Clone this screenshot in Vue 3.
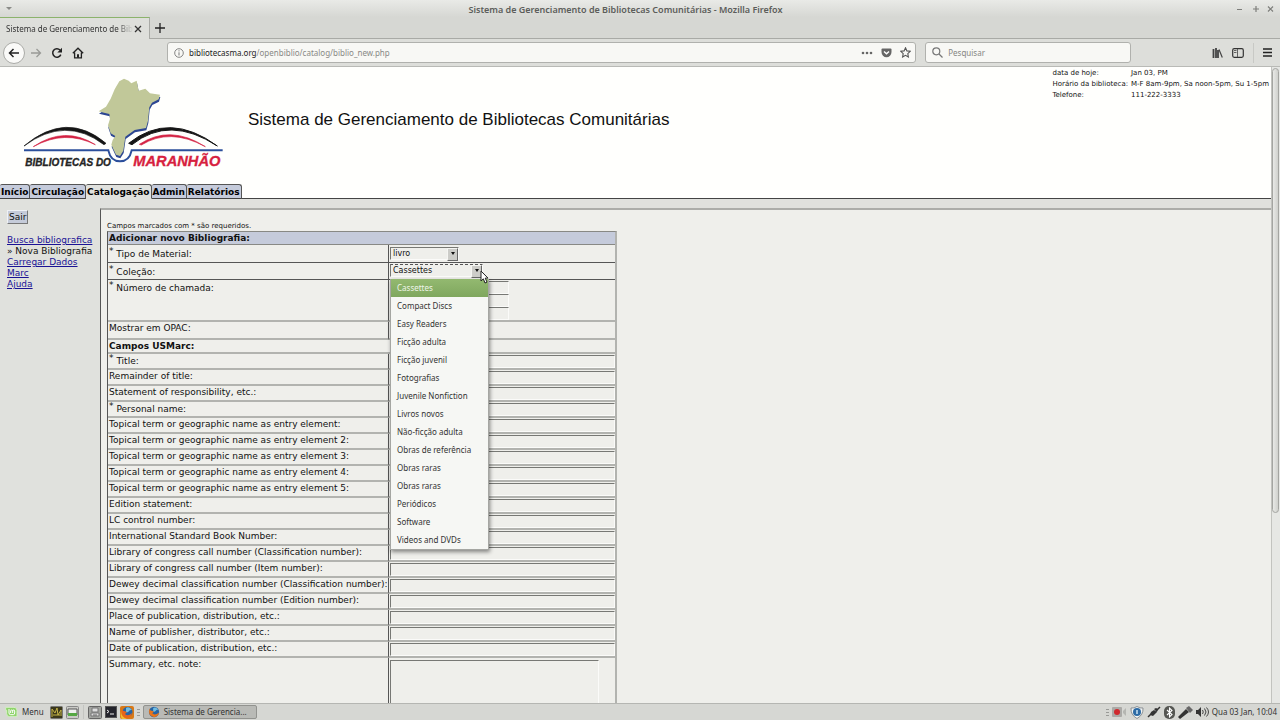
<script setup>
import { ref } from 'vue'

const tabs = ['Início', 'Circulação', 'Catalogação', 'Admin', 'Relatórios']
const activeTab = ref('Catalogação')

const material = ref('livro')
const collection = ref('Cassettes')
const menuOpen = ref(true)

const collections = [
  'Cassettes',
  'Compact Discs',
  'Easy Readers',
  'Ficção adulta',
  'Ficção juvenil',
  'Fotografias',
  'Juvenile Nonfiction',
  'Livros novos',
  'Não-ficção adulta',
  'Obras de referência',
  'Obras raras',
  'Obras raras',
  'Periódicos',
  'Software',
  'Videos and DVDs'
]

const selectedIndex = ref(0)

const choose = (index) => {
  selectedIndex.value = index
  collection.value = collections[index]
  menuOpen.value = false
}

const fields = [
  { label: 'Title:', required: true },
  { label: 'Remainder of title:' },
  { label: 'Statement of responsibility, etc.:' },
  { label: 'Personal name:', required: true },
  { label: 'Topical term or geographic name as entry element:' },
  { label: 'Topical term or geographic name as entry element 2:' },
  { label: 'Topical term or geographic name as entry element 3:' },
  { label: 'Topical term or geographic name as entry element 4:' },
  { label: 'Topical term or geographic name as entry element 5:' },
  { label: 'Edition statement:' },
  { label: 'LC control number:' },
  { label: 'International Standard Book Number:' },
  { label: 'Library of congress call number (Classification number):' },
  { label: 'Library of congress call number (Item number):' },
  { label: 'Dewey decimal classification number (Classification number):' },
  { label: 'Dewey decimal classification number (Edition number):' },
  { label: 'Place of publication, distribution, etc.:' },
  { label: 'Name of publisher, distributor, etc.:' },
  { label: 'Date of publication, distribution, etc.:' }
]
</script>

<template>
  <div class="desktop">
    <div class="titlebar">
      <svg class="win-menu" width="8" height="5" viewBox="0 0 8 5"><path d="M1 1h6L4 4z" fill="#8a8b88" /></svg>
      <span class="win-title">Sistema de Gerenciamento de Bibliotecas Comunitárias - Mozilla Firefox</span>
      <svg class="win-buttons" width="38" height="8" viewBox="0 0 38 8" stroke="#7d7e7b" stroke-width="1.2" fill="none">
        <path d="M1 4.500h5M17 4h6M20 1v6M32 1.500l5 5M37 1.500l-5 5" />
      </svg>
    </div>

    <div class="tabstrip">
      <div class="browser-tab">
        <span class="tab-label">Sistema de Gerenciamento de Bib</span>
        <button class="plain" aria-label="Fechar aba">
          <svg width="8" height="8" viewBox="0 0 8 8"><path d="M1 1l6 6M7 1L1 7" stroke="#333" stroke-width="1.300" /></svg>
        </button>
      </div>
      <button class="plain new-tab" aria-label="Nova aba">
        <svg width="10" height="10" viewBox="0 0 10 10"><path d="M5 0v10M0 5h10" stroke="#222" stroke-width="1.300" /></svg>
      </button>
    </div>

    <div class="navbar">
      <button class="back" aria-label="Voltar">
        <svg width="12" height="10" viewBox="0 0 12 10" fill="none" stroke="#222" stroke-width="1.500"><path d="M11 5H1.500M5.500 1l-4 4 4 4" /></svg>
      </button>
      <button class="plain" aria-label="Avançar">
        <svg width="12" height="10" viewBox="0 0 12 10" fill="none" stroke="#999a97" stroke-width="1.300"><path d="M1 5h9.500M6.500 1l4 4-4 4" /></svg>
      </button>
      <button class="plain" aria-label="Recarregar">
        <svg width="12" height="12" viewBox="0 0 12 12" fill="none" stroke="#222" stroke-width="1.500"><path d="M9.800 7.600A4.200 4.200 0 1 1 9 3.100" /><path d="M11 .8v4.700H6.300z" fill="#222" stroke="none" /></svg>
      </button>
      <button class="plain" aria-label="Início">
        <svg width="12" height="12" viewBox="0 0 12 12" fill="none" stroke="#222" stroke-width="1.300"><path d="M.8 6.300L6 1.200l5.200 5.100M2.600 5.500v5.300h6.800V5.500" /><path d="M5 7.200h2v3.600H5z" fill="#222" stroke="none" /></svg>
      </button>
      <div class="urlbar">
        <svg width="10" height="10" viewBox="0 0 10 10" fill="none" stroke="#777"><circle cx="5" cy="5" r="4.300" stroke-width=".9" /><path d="M5 4.300v3.200M5 2.300v1.100" /></svg>
        <span class="url"><b>bibliotecasma.org</b>/openbiblio/catalog/biblio_new.php</span>
        <svg width="12" height="10" viewBox="0 0 12 10" fill="#666"><circle cx="2" cy="5" r="1.300" /><circle cx="6" cy="5" r="1.300" /><circle cx="10" cy="5" r="1.300" /></svg>
        <svg width="11" height="10" viewBox="0 0 11 10"><path d="M1.500.5h8q1 0 1 1V4a5 5.300 0 0 1-10 0V1.500q0-1 1-1z" fill="#666" /><path d="M3 3.500l2.500 2.300L8 3.500" fill="none" stroke="#fff" stroke-width="1.400" /></svg>
        <svg width="11" height="11" viewBox="0 0 11 11"><path d="M5.500.8l1.400 3.100 3.300.4-2.400 2.300.6 3.400-2.900-1.700L2.600 10l.6-3.400L.8 4.300l3.300-.4z" fill="none" stroke="#555" stroke-width="1.100" /></svg>
      </div>
      <div class="searchbar">
        <svg width="11" height="11" viewBox="0 0 11 11" fill="none" stroke="#777" stroke-width="1.200"><circle cx="4.300" cy="4.300" r="3.500" /><path d="M7 7l3.500 3.500" /></svg>
        <input type="text" placeholder="Pesquisar" aria-label="Pesquisar" />
      </div>
      <div class="nav-tools">
        <button class="plain" aria-label="Biblioteca">
          <svg width="11" height="10" viewBox="0 0 11 10" fill="none" stroke="#444"><path d="M1.500 1v9M4 0v10M6 2v8" stroke-width="1.800" /><path d="M7 1.500L10.300 9.500" stroke-width="1.200" /></svg>
        </button>
        <button class="plain" aria-label="Painel lateral">
          <svg width="12" height="10" viewBox="0 0 12 10"><rect x=".7" y=".7" width="10.600" height="8.600" rx="1.500" fill="none" stroke="#333" stroke-width="1.200" /><path d="M2 2.500h2.500M2 4.500h2.500M5.500 1v8" stroke="#555" stroke-width=".9" /></svg>
        </button>
        <span class="divider"></span>
        <button class="plain" aria-label="Abrir menu">
          <svg width="9" height="9" viewBox="0 0 9 9"><path d="M0 1h9M0 4.500h9M0 8h9" stroke="#222" stroke-width="1.300" /></svg>
        </button>
      </div>
    </div>

    <div class="viewport">
      <div class="page">
        <header class="site-header">
          <svg class="logo" width="205" height="95" viewBox="60 30 615 285">
            <defs>
              <path id="state" d="M372 38l14 6 8 8 16-8 6 30 20-6 14 14 30 4-4 14-20 10-8 14-4 40-6 22-34 6-28 20-6 42-10 16-12-4-14-30 4-14 8-12-14-8-8-24 6-20-2-14-16-4-16-4 22-14 14-24 12-28 14-24z" />
            </defs>
            <path d="M72 240Q200 132 318 232L312 236Q196 148 72 240z" fill="#151515" stroke="#151515" stroke-width="2" />
            <path d="M386 232Q508 134 652 240Q508 146 396 236z" fill="#151515" stroke="#151515" stroke-width="3" />
            <path d="M100 242Q194 178 286 236Q194 190 100 242zM418 235Q510 174 616 242Q510 184 424 237z" fill="#d32142" stroke="#d32142" stroke-width="2" />
            <path d="M72 253H325Q332 286 360 286T395 253H668" fill="none" stroke="#2c4f9b" stroke-width="6" />
            <use href="#state" x="1" y="7" fill="#2c4692" />
            <use href="#state" fill="#c1c899" />
            <text class="logo-dark" x="76" y="300" font-size="30">BIBLIOTECAS DO</text>
            <text class="logo-red" x="400" y="300" font-size="44">MARANHÃO</text>
          </svg>
          <h1>Sistema de Gerenciamento de Bibliotecas Comunitárias</h1>
          <dl class="library-info">
            <dt>data de hoje:</dt><dd>Jan 03, PM</dd>
            <dt>Horário da biblioteca:</dt><dd>M-F 8am-9pm, Sa noon-5pm, Su 1-5pm</dd>
            <dt>Telefone:</dt><dd>111-222-3333</dd>
          </dl>
        </header>

        <nav class="site-tabs">
          <a v-for="tab in tabs" :key="tab" href="#" :class="{ active: tab === activeTab }" @click.prevent="activeTab = tab">{{ tab }}</a>
        </nav>

        <div class="columns">
          <aside class="sidebar">
            <button class="logout">Sair</button>
            <a href="#">Busca bibliografica</a>
            <span>» Nova Bibliografia</span>
            <a href="#">Carregar Dados</a>
            <a href="#">Marc</a>
            <a href="#">Ajuda</a>
          </aside>

          <main class="content">
            <p class="note">Campos marcados com * são requeridos.</p>
            <table class="form">
              <colgroup>
                <col class="label-col" />
                <col />
              </colgroup>
              <thead>
                <tr class="heading"><th colspan="2">Adicionar novo Bibliografia:</th></tr>
              </thead>
              <tbody>
                <tr class="material">
                  <td><label for="material"><sup>*</sup> Tipo de Material:</label></td>
                  <td>
                    <div class="picker picker-small">
                      <select id="material" v-model="material"><option>livro</option></select>
                    </div>
                  </td>
                </tr>
                <tr class="collection">
                  <td><label for="collection"><sup>*</sup> Coleção:</label></td>
                  <td>
                    <div class="picker focused">
                      <select id="collection" v-model="collection" @mousedown.prevent="menuOpen = !menuOpen">
                        <option v-for="(item, i) in collections" :key="i">{{ item }}</option>
                      </select>
                      <ul v-if="menuOpen" class="menu" role="listbox">
                        <li
                          v-for="(item, i) in collections"
                          :key="i"
                          role="option"
                          :aria-selected="i === selectedIndex"
                          :class="{ selected: i === selectedIndex }"
                          @click="choose(i)"
                        >{{ item }}</li>
                      </ul>
                      <svg class="pointer" width="9" height="14" viewBox="0 0 9 14"><path d="M1 1v10l2.300-2.200L5 13l2-.9-1.800-4H8z" fill="#fff" stroke="#222" /></svg>
                    </div>
                  </td>
                </tr>
                <tr class="call-number">
                  <td><label for="call1"><sup>*</sup> Número de chamada:</label></td>
                  <td>
                    <input id="call1" type="text" />
                    <input type="text" aria-label="Número de chamada 2" />
                    <input type="text" aria-label="Número de chamada 3" />
                  </td>
                </tr>
                <tr class="opac">
                  <td><label for="opac">Mostrar em OPAC:</label></td>
                  <td><input id="opac" type="checkbox" checked /></td>
                </tr>
                <tr class="heading usmarc"><th colspan="2">Campos USMarc:</th></tr>
                <tr v-for="(field, i) in fields" :key="field.label" class="field" :class="{ required: field.required }">
                  <td><label :for="'field' + i"><template v-if="field.required"><sup>*</sup>&nbsp;</template>{{ field.label }}</label></td>
                  <td><input :id="'field' + i" type="text" /></td>
                </tr>
                <tr class="summary">
                  <td><label for="summary">Summary, etc. note:</label></td>
                  <td><textarea id="summary"></textarea></td>
                </tr>
              </tbody>
            </table>
          </main>
        </div>
      </div>
      <div class="scrollbar"><div class="thumb"></div></div>
    </div>

    <footer class="taskbar">
      <button class="plain start">
        <svg width="13" height="12" viewBox="0 0 39 36"><path d="M2 4h25q9 0 9 9v19H14q-9 0-9-9V13H2z" fill="#8fd36b" stroke="#d5efc6" stroke-width="3" /><path d="M12 9v12q0 5 5 5h8q4 0 4-5v-6q0-3-3-3t-3 3v6m0-6q0-3-3-3t-3 3v6" fill="none" stroke="#fff" stroke-width="3" /></svg>
        Menu
      </button>
      <svg width="13" height="13" viewBox="0 0 13 13"><rect x=".5" y=".5" width="12" height="12" rx="1" fill="#3b381b" stroke="#777" /><path d="M2 11V3l3 4 2-5 1 7 3-5v6M3 9h7" fill="none" stroke="#c5b449" /></svg>
      <svg width="13" height="13" viewBox="0 0 13 13"><rect x=".5" y=".5" width="12" height="12" rx="1" fill="#c9cac6" stroke="#888" /><path d="M2 3h9v6H2z" fill="#eef0ee" stroke="#555" /><path d="M2 7h9v3H2z" fill="#55a844" /></svg>
      <i class="task-divider"></i>
      <svg width="14" height="13" viewBox="0 0 14 13"><rect x=".5" y=".5" width="13" height="12" rx="1" fill="#a2a4a0" stroke="#666" /><path d="M4 2h6v4H4zM3 7h8v3H3z" fill="#ddd" stroke="#777" /><path d="M5 9h4" stroke="#666" /></svg>
      <svg width="12" height="12" viewBox="0 0 12 12"><rect x=".5" y=".5" width="11" height="11" fill="#24242b" stroke="#555" /><path d="M2 4l2 1.500L2 7M5 8h4" fill="none" stroke="#eee" /></svg>
      <svg width="14" height="13" viewBox="0 0 14 13"><rect width="14" height="13" rx="2" fill="#d87917" /><circle cx="7.500" cy="6" r="5" fill="#2864a3" /><path d="M6 2q3-2 6 2-2-.5-3 1-1 2-3 1z" fill="#70bde2" /><path d="M2 2q0 3 2 3l3 1-2 2q3 3 7-1-1 5-6 5-6-2-4-10z" fill="#e8641b" /><path d="M1 5q0 6 6 8H2Q0 10 1 5z" fill="#f3bd30" /></svg>
      <span class="grip"></span>
      <button class="task">
        <svg width="12" height="12" viewBox="0 0 14 13"><circle cx="7" cy="6.500" r="6" fill="#2864a3" /><path d="M6 2q3-2 6 2-2-.5-3 1-1 2-3 1z" fill="#70bde2" /><path d="M2 2q0 3 2 3l3 1-2 2q3 3 8-1-1 5-6 5.500Q-1 11 2 2z" fill="#e8741b" /></svg>
        <span>Sistema de Gerencia...</span>
      </button>
      <div class="tray">
        <span class="grip"></span>
        <svg width="15" height="12" viewBox="0 0 15 12"><rect x="0" y="1" width="10" height="10" rx="1" fill="#aaa9a6" /><circle cx="5" cy="6" r="3" fill="#d0292e" /><path d="M11 5l3-3v8l-3-3z" fill="#b5b6b2" /></svg>
        <svg width="14" height="13" viewBox="0 0 14 13"><path d="M7 .5q3 2 6 1.500.5 7-6 10.500Q.500 9 1 2q3 .5 6-1.500z" fill="#f3f4f2" stroke="#8a9095" /><circle cx="7" cy="6" r="4" fill="#2d6ba5" /><path d="M7 4v4" stroke="#c9e2f5" stroke-width="1.500" /></svg>
        <svg width="14" height="12" viewBox="0 0 14 12"><path d="M1 11l4-4M9 5l4-4" stroke="#333" stroke-width="1.500" /><path d="M4 6l3-2 3 2-4 4-3-1zM7 3l2-1 2 1-1 3z" fill="#333" /></svg>
        <svg width="11" height="13" viewBox="0 0 11 13"><rect width="11" height="13" rx="5" fill="#555652" /><path d="M3 4l5 4.500L5.500 11V2L8 4.500 3 9" fill="none" stroke="#fff" stroke-width="1.100" /></svg>
        <svg width="15" height="13" viewBox="0 0 15 13"><path d="M0 11l8-8 3 3-9 7z" fill="#333" /><path d="M8 2l3-2 4 4-3 3z" fill="#666" /></svg>
        <svg width="13" height="10" viewBox="0 0 13 10"><path d="M0 3h2l3-3v10L2 7H0z" fill="#333" /><path d="M6.500 3q1.500 2 0 4M8.500 1.500q3 3.500 0 7M10.500.5q4 4.500 0 9" fill="none" stroke="#444" /></svg>
        <span class="clock">Qua 03 Jan, 10:04</span>
      </div>
    </footer>
  </div>
</template>

<style>
body {
  margin: 0;
  overflow: hidden;
}
</style>

<style scoped>
.desktop {
  display: flex;
  flex-direction: column;
  height: 100vh;
  background: #d6d7d3;
  color: #333;
  font: 8px/12px "Noto Sans", sans-serif;
}

.desktop * {
  box-sizing: border-box;
}

svg {
  display: block;
  flex: none;
}

button,
input,
select,
textarea {
  font: inherit;
  color: inherit;
  margin: 0;
}

.plain {
  border: 0;
  padding: 0;
  background: none;
  display: flex;
  align-items: center;
}

.titlebar {
  display: flex;
  align-items: center;
  height: 17px;
  padding: 0 6px 0 5px;
  background: linear-gradient(#e9eae7, #d6d7d3);
}

.win-title {
  flex: 1;
  text-align: center;
  font-size: 9px;
  font-weight: 600;
  color: #5c5d5a;
  padding-top: 2px;
  padding-left: 2px;
}

.tabstrip {
  display: flex;
  height: 22px;
  border-bottom: 1px solid #a9aaa6;
}

.browser-tab {
  display: flex;
  align-items: center;
  justify-content: space-between;
  width: 150px;
  height: 22px;
  padding: 0 7px 0 6px;
  border-top: 1px solid #8cb36c;
  border-right: 1px solid #a9aaa6;
  background: #dedfdb;
}

.tab-label {
  white-space: nowrap;
  mask-image: linear-gradient(to right, #000 88%, transparent);
}

.new-tab {
  padding: 0 5px;
}

.navbar {
  display: flex;
  align-items: center;
  gap: 9px;
  height: 28px;
  padding: 0 8px 0 3px;
  background: #dddeda;
  border-bottom: 1px solid #b9bab6;
}

.back {
  display: flex;
  align-items: center;
  justify-content: center;
  width: 22px;
  height: 22px;
  margin-right: -4px;
  padding: 0;
  border: 1px solid #aaaba7;
  border-radius: 50%;
  background: #fafaf8;
}

.urlbar,
.searchbar {
  display: flex;
  align-items: center;
  gap: 8px;
  height: 21px;
  padding: 0 4px 0 6px;
  border: 1px solid #b0b1ad;
  border-radius: 3px;
  background: #f8f8f5;
}

.urlbar {
  flex: 738;
  margin-left: 74px;
}

.urlbar > svg:first-child {
  margin-right: -3px;
}

.url {
  flex: 1;
  color: #888985;
}

.url b {
  font-weight: normal;
  color: #222;
}

.searchbar {
  flex: 194;
  gap: 3px;
}

.searchbar input {
  flex: 1;
  min-width: 0;
  border: 0;
  background: none;
  outline: none;
}

.searchbar input::placeholder {
  color: #858682;
}

.nav-tools {
  display: flex;
  align-items: center;
  gap: 9px;
  margin-left: 72px;
}

.divider {
  width: 1px;
  height: 20px;
  background: #c8c9c5;
}

.viewport {
  display: flex;
  flex: 1;
  min-height: 0;
  overflow: hidden;
}

.page {
  display: flex;
  flex-direction: column;
  flex: 1;
  min-width: 0;
  color: #111;
  background: #e0e1dd;
  font: 9px/11px "DejaVu Sans", sans-serif;
}

.site-header {
  display: flex;
  align-items: flex-start;
  height: 117px;
  flex: none;
  background: #fffffd;
}

.logo {
  margin: 9px 0 0 20px;
}

.logo-dark,
.logo-red {
  font-family: "Liberation Sans Narrow", "Liberation Sans", sans-serif;
  font-weight: bold;
  font-style: italic;
  fill: #252525;
  stroke: #252525;
  stroke-width: 1px;
}

.logo-red {
  font-family: "Liberation Sans", sans-serif;
  fill: #d71f3f;
  stroke: #d71f3f;
}

.site-header h1 {
  flex: 1;
  margin: 43px 0 0 23px;
  font: 17px/20px "Liberation Sans", sans-serif;
}

.library-info {
  display: grid;
  grid-template-columns: auto auto;
  column-gap: 3px;
  margin: 1px 2px 0 0;
  font-size: 7px;
  white-space: nowrap;
}

.library-info dd {
  margin: 0;
}

.site-tabs {
  display: flex;
  flex: none;
  height: 15px;
  background: #fffffd;
  border-bottom: 1px solid #444;
}

.site-tabs a {
  height: 15px;
  padding: 2px 1px 0;
  border: 1px solid #555;
  border-bottom-color: #444;
  border-left-width: 0;
  border-radius: 2px 3px 0 0;
  background: #c5cbdb;
  color: #000;
  font-weight: bold;
  font-size: 9px;
  text-decoration: none;
}

.site-tabs a.active {
  background: #e0e1dd;
  border-bottom-color: #e0e1dd;
}

.columns {
  display: flex;
  flex: 1;
  min-height: 0;
  padding-top: 9px;
}

.sidebar {
  display: flex;
  flex-direction: column;
  align-items: flex-start;
  width: 100px;
  padding: 2px 0 0 7px;
  white-space: nowrap;
  line-height: 11px;
}

.sidebar a {
  color: #1a1295;
}

.logout {
  height: 14px;
  margin-bottom: 11px;
  padding: 0 1px;
  border: 1px solid;
  border-color: #eff1f5 #777 #777 #eff1f5;
  background: #c5cbd9;
}

.content {
  flex: 1;
  padding: 11px 0 0 6px;
  border-top: 2px solid #acada9;
  border-left: 1px solid #555;
  background: #efefeb;
}

.note {
  margin: 0;
  font-size: 7px;
  line-height: 10px;
}

.form {
  width: 510px;
  table-layout: fixed;
  border-spacing: 0;
  border: 1px solid #888985;
  border-left-color: #555;
  border-right: 2px solid #b2b3af;
}

.label-col {
  width: 281px;
}

.form td,
.form th {
  padding: 0;
  border-bottom: 2px solid #b2b3af;
  vertical-align: top;
  text-align: left;
  white-space: nowrap;
}

.form td:first-child {
  padding: 1px 0 0 1px;
  border-right: 1px solid #555;
}

.form td:last-child {
  padding: 1px 0 0 1px;
}

.form label {
  display: block;
}

.form sup {
  font-size: 9px;
  line-height: 0;
  vertical-align: 3px;
}

.heading th {
  height: 14px;
  padding: 0 0 0 1px;
  line-height: 12px;
}

thead .heading th {
  height: 13px;
  background: #c5cbdb;
  border-bottom: 1px solid #888985;
}

.material td {
  height: 18px;
  border-bottom: 1px solid #555;
}

.collection td {
  height: 17px;
  border-bottom: 1px solid #555;
}

.form .material td:first-child,
.form .collection td:first-child {
  padding-top: 4px;
}

.form .call-number td:first-child {
  padding-top: 3px;
}

.form .required td:first-child {
  padding-top: 2px;
}

.call-number td {
  height: 42px;
}

.opac td {
  height: 18px;
}

.form .material td:last-child {
  padding-top: 2px;
}

.field td {
  height: 16px;
}

.form input[type="text"],
.form textarea {
  display: block;
  width: 225px;
  height: 13px;
  padding: 0 1px;
  border: 1px solid;
  border-color: #777874 #fbfbf9 #fbfbf9 #777874;
  border-radius: 0;
  background: #efefeb;
  outline: none;
}

.form .call-number input {
  width: 119px;
}

.form input[type="checkbox"] {
  width: 10px;
  height: 10px;
}

.form textarea {
  width: 209px;
  height: 64px;
  margin-top: 1px;
  resize: none;
}

.picker {
  position: relative;
  width: 93px;
  height: 14px;
}

.picker-small {
  width: 69px;
}

.picker select {
  display: block;
  width: 100%;
  height: 13px;
  padding: 0 2px;
  appearance: none;
  border: 1px solid;
  border-color: #777874 #fbfbf9 #fbfbf9 #777874;
  border-radius: 0;
  background: #efefeb;
  font-size: 8px;
  line-height: 10px;
  outline: none;
}

.picker.focused select {
  border-top: 1px dashed #555;
}

.picker::before {
  content: "";
  position: absolute;
  top: 1px;
  right: 1px;
  width: 9px;
  height: 11px;
  border: 1px solid;
  border-color: #f5f5f2 #666 #666 #f5f5f2;
  background: #ccccc8;
  pointer-events: none;
}

.picker::after {
  content: "";
  position: absolute;
  top: 5px;
  right: 4px;
  border: 2px solid transparent;
  border-top: 3px solid #111;
  border-bottom: 0;
  pointer-events: none;
}

.menu {
  position: absolute;
  z-index: 2;
  top: 15px;
  left: 0;
  width: 99px;
  margin: 0;
  padding: 0;
  list-style: none;
  color: #333;
  background: #f6f7f4;
  border: 1px solid #a5a6a2;
  border-top: 0;
  box-shadow: 1px 2px 4px rgba(0, 0, 0, 0.45);
  font: 8px/18px "Noto Sans", sans-serif;
}

.menu li {
  height: 18px;
  padding-left: 6px;
}

.menu li.selected {
  color: #eef5e8;
  background: linear-gradient(#93b970, #7fa75e);
}

.pointer {
  position: absolute;
  z-index: 3;
  top: 6px;
  left: 90px;
}

.scrollbar {
  flex: none;
  width: 9px;
  padding: 1px 1px 0 0;
  border-left: 1px solid #c2c3bf;
  background: #e6e7e4;
}

.thumb {
  height: 70%;
  border: 1px solid #a4a5a1;
  border-radius: 4px;
  background: linear-gradient(to right, #e8e9e6, #d0d1cd);
}

.taskbar {
  display: flex;
  align-items: center;
  gap: 3px;
  height: 17px;
  flex: none;
  padding: 0 3px 0 5px;
  border-top: 1px solid #b5b6b2;
}

.start {
  gap: 4px;
  margin-right: 3px;
}

.task-divider {
  width: 1px;
  height: 14px;
  margin: 0 1px;
  background: #c4c5c1;
}

.grip {
  width: 3px;
  height: 7px;
  background: repeating-linear-gradient(#999a97 0 1px, transparent 1px 3px);
}

.task {
  display: flex;
  align-items: center;
  gap: 4px;
  width: 114px;
  height: 14px;
  padding: 0 4px;
  border: 1px solid #92938f;
  border-radius: 2px;
  background: #b9bab6;
}

.tray {
  display: flex;
  align-items: center;
  gap: 3px;
  margin-left: auto;
}
</style>
